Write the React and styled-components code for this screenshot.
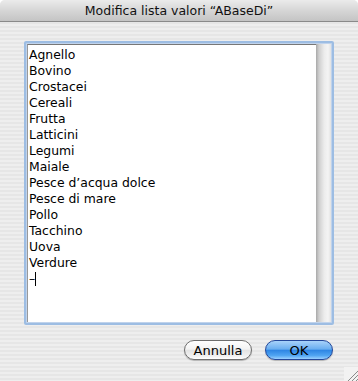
import React from 'react';
import styled, { createGlobalStyle } from 'styled-components';

const Global = createGlobalStyle`
  html, body {
    margin: 0;
    padding: 0;
    background: #ffffff;
  }
`;

const Window = styled.div`
  width: 358px;
  height: 381px;
  display: flex;
  flex-direction: column;
  font-family: 'DejaVu Sans', 'Liberation Sans', sans-serif;
  background: repeating-linear-gradient(
    to bottom,
    #eeeeee 0px,
    #eeeeee 2px,
    #e6e6e6 2px,
    #e6e6e6 4px
  );
  border-radius: 5px 5px 0 0;
  overflow: hidden;
  position: relative;
`;

const TitleBar = styled.div`
  height: 21px;
  flex: none;
  border-bottom: 1px solid #8a8a8a;
  background: linear-gradient(to bottom, #ebebeb 0%, #d6d6d6 50%, #c4c4c4 100%);
  display: flex;
  align-items: center;
  justify-content: center;
  font-size: 12.5px;
  color: #111;
`;

const Body = styled.div`
  flex: 1;
  display: flex;
  flex-direction: column;
  padding: 19px 24px 0 24px;
`;

const FocusRing = styled.div`
  width: 310px;
  height: 284px;
  box-sizing: border-box;
  border: 2px solid #9dbde3;
  border-radius: 2px;
  box-shadow: 0 0 1px 1px rgba(140, 175, 220, 0.6) inset;
  display: flex;
  background: #fff;
  padding: 1px;
`;

const TextPane = styled.div`
  flex: 1;
  border-top: 1px solid #777;
  border-left: 1px solid #999;
  padding: 2px 0 0 1px;
  background: #fff;
  font-size: 12.4px;
  line-height: 16px;
  color: #000;
`;

const Scrollbar = styled.div`
  width: 15px;
  background: linear-gradient(
    to right,
    #a9a9a9 0%,
    #cfcfcf 20%,
    #ececec 55%,
    #f4f4f4 80%,
    #e2e2e2 100%
  );
`;

const Line = styled.div`
  white-space: pre;
`;

const Caret = styled.span`
  display: inline-block;
  width: 1px;
  height: 14px;
  background: #000;
  vertical-align: -3px;
`;

const ButtonRow = styled.div`
  display: flex;
  justify-content: flex-end;
  gap: 13px;
  margin-top: 15px;
  padding-right: 1px;
`;

const Button = styled.div`
  width: 68px;
  height: 20px;
  box-sizing: border-box;
  border-radius: 10px;
  display: flex;
  align-items: center;
  justify-content: center;
  font-size: 13px;
  color: #000;
  border: 1px solid ${p => (p.$primary ? '#23479a' : '#6e6e6e')};
  background: ${p =>
    p.$primary
      ? 'linear-gradient(to bottom, #a8d2fa 0%, #6aaef0 45%, #2f86e4 52%, #4fa4f2 80%, #9ad0ff 100%)'
      : 'linear-gradient(to bottom, #ffffff 0%, #f3f3f3 45%, #e3e3e3 52%, #f2f2f2 85%, #ffffff 100%)'};
  box-shadow: 0 1px 1px rgba(0, 0, 0, 0.25);
`;

const Grip = styled.svg`
  position: absolute;
  right: 0;
  bottom: 0;
`;

const items = [
  'Agnello',
  'Bovino',
  'Crostacei',
  'Cereali',
  'Frutta',
  'Latticini',
  'Legumi',
  'Maiale',
  'Pesce d’acqua dolce',
  'Pesce di mare',
  'Pollo',
  'Tacchino',
  'Uova',
  'Verdure'
];

export default function App() {
  return (
    <>
      <Global />
      <Window>
        <TitleBar>Modifica lista valori “ABaseDi”</TitleBar>
        <Body>
          <FocusRing>
            <TextPane>
              {items.map(i => (
                <Line key={i}>{i}</Line>
              ))}
              <Line>
                –<Caret />
              </Line>
            </TextPane>
            <Scrollbar />
          </FocusRing>
          <ButtonRow>
            <Button>Annulla</Button>
            <Button $primary>OK</Button>
          </ButtonRow>
        </Body>
        <Grip width='14' height='14' viewBox='0 0 14 14'>
          <rect x='0' y='0' width='14' height='14' fill='#f2f2f2' />
          <line x1='4' y1='14' x2='14' y2='4' stroke='#8a8a8a' />
          <line x1='8' y1='14' x2='14' y2='8' stroke='#8a8a8a' />
          <line x1='12' y1='14' x2='14' y2='12' stroke='#8a8a8a' />
        </Grip>
      </Window>
    </>
  );
}
